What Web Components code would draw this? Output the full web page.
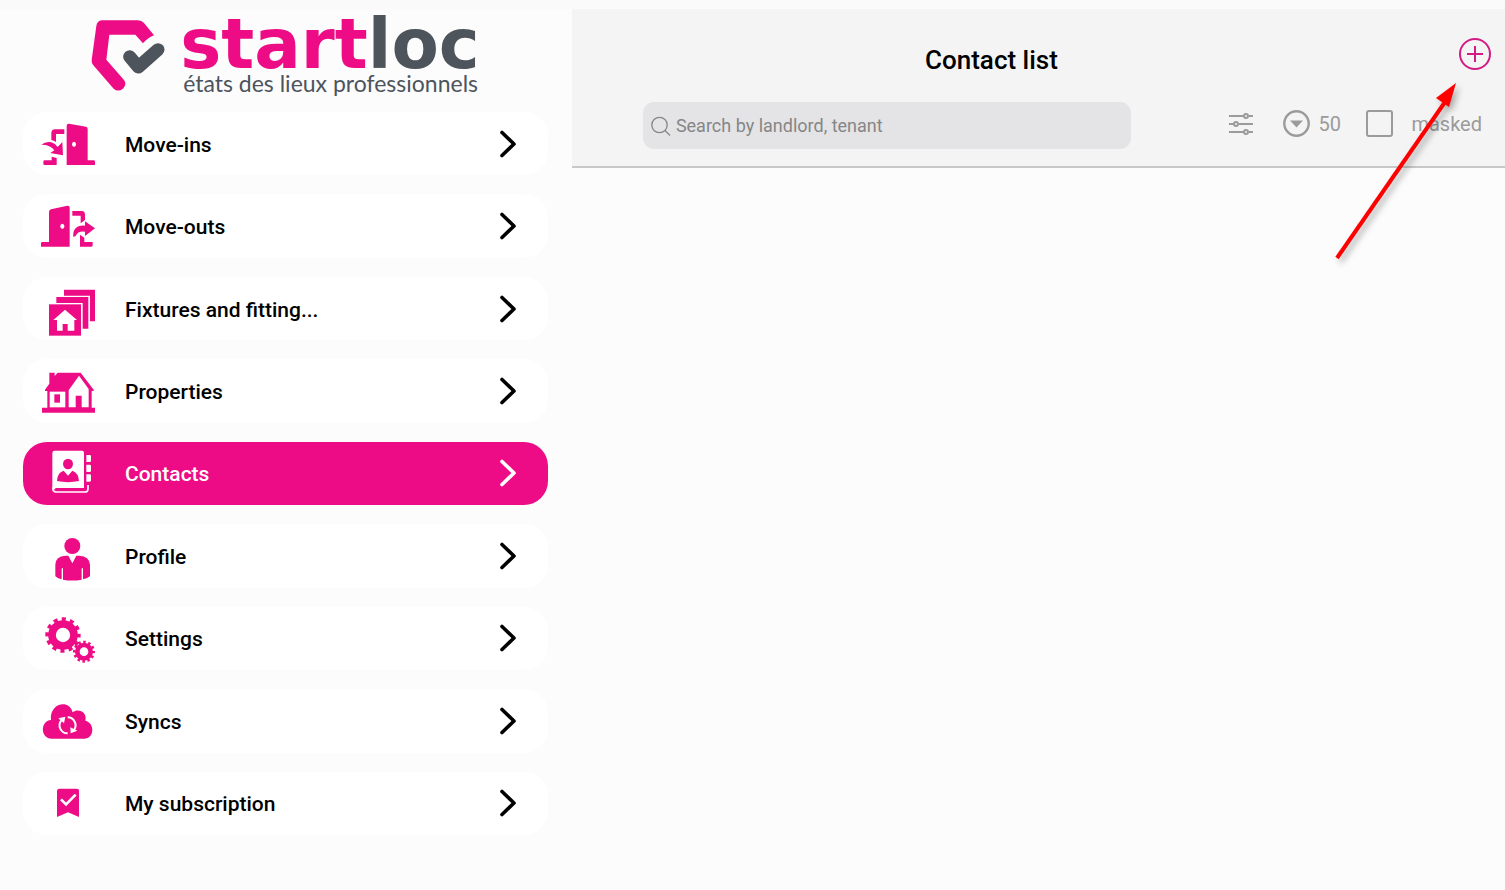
<!DOCTYPE html>
<html lang="en">
<head>
<meta charset="utf-8">
<meta name="viewport" content="width=device-width, initial-scale=1">
<title>Startloc - Contact list</title>
<style>
  :root {
    --brand: #ed0c86;
    --ink: #4d545c;
    --muted: #9b9b9b;
  }
  * { box-sizing: border-box; }
  body {
    margin: 0;
    background: #fcfcfc;
    color: #000;
    font-family: Roboto, "Liberation Sans", sans-serif;
  }
</style>
</head>
<body>
<startloc-app>
  <startloc-logo slot="side"></startloc-logo>
  <startloc-menu slot="side">
    <menu-entry icon="moveIn">Move-ins</menu-entry>
    <menu-entry icon="moveOut">Move-outs</menu-entry>
    <menu-entry icon="fixtures">Fixtures and fitting...</menu-entry>
    <menu-entry icon="house">Properties</menu-entry>
    <menu-entry icon="contacts" active>Contacts</menu-entry>
    <menu-entry icon="person">Profile</menu-entry>
    <menu-entry icon="gears">Settings</menu-entry>
    <menu-entry icon="cloud">Syncs</menu-entry>
    <menu-entry icon="bookmark">My subscription</menu-entry>
  </startloc-menu>
  <list-header>
    Contact list
    <search-field slot="tools" placeholder="Search by landlord, tenant"></search-field>
    <list-filters slot="tools"></list-filters>
  </list-header>
  <pointer-arrow></pointer-arrow>
</startloc-app>

<script>
const icons = {
  moveIn: {
    box: "96 50 162 162",
    body: `
      <path d="M170 76Q170 69 177 70L228 79Q233 80 233 86V180H251Q255 180 255 184V194H170Z"/>
      <ellipse class="hole" cx="192" cy="132" rx="6" ry="8"/>
      <path d="M163 87H135Q124 88 124 98V119Q131 120 138 125V101H163Z"/>
      <path d="M104 180H125V169L140 173V194H104Q100 194 100 190V184Q100 180 104 180Z"/>
      <path d="M94 133Q108 122 124 126Q136 130 143 140L157 125L159 165L121 158L133 150Q122 133 94 133Z"/>`
  },
  moveOut: {
    box: "96 297 162 162",
    body: `
      <path d="M93 430Q93 426 97 426H117V336Q117 330 123 328L172 317Q179 316 179 323V440H93Z"/>
      <ellipse class="hole" cx="157" cy="379" rx="6" ry="8"/>
      <path d="M187 333H216Q225 334 225 344V360L212 370V347H187Z"/>
      <path d="M210 404L223 413V426H248V436Q248 440 244 440H210Z"/>
      <path d="M190 411C188 387 200 375 225 377V364L255 385L225 408V395Q204 392 197 408Z"/>`
  },
  fixtures: {
    box: "96 35 162 162",
    body: `
      <path d="M162 58H255V153H240V76H162Z"/>
      <path d="M139 80H235V175H218V98H139Z"/>
      <path d="M117 102H213V196H117Z"/>
      <path class="hole" d="M165 118L201 149H193V181H173V161H158V181H141V149H130Z"/>`
  },
  house: {
    box: "96 282 162 162",
    body: `
      <path d="M118 308H134V318L143 308H212L251 359V363H245V413H255V428H96V413H112V363H105V359L118 341Z"/>
      <path class="hole" d="M119 365H166V412H119Z"/>
      <path d="M133 373H150V398H133Z"/>
      <path class="hole" d="M207 317L236 357V412H215V377H197V412H176V361Z"/>`
  },
  contacts: {
    box: "96 48 162 162",
    body: `
      <path d="M134 62H216Q222 62 222 68V174H136V178H127V69Q127 62 134 62Z"/>
      <path d="M129 172V177Q129 186 138 186H224Q234 186 234 176V165" fill="none" stroke="currentColor" stroke-width="5"/>
      <path d="M229 75H239Q243 75 243 79V92Q243 96 239 96H229ZM229 104H239Q243 104 243 108V122Q243 126 239 126H229ZM229 133H239Q243 133 243 137V151Q243 155 239 155H229Z"/>
      <ellipse class="hole" cx="174" cy="102" rx="15" ry="16"/>
      <path class="hole" d="M141 153Q141 128 161 122L174 137L187 122Q206 129 207 153Q174 160 141 153Z"/>`
  },
  person: {
    box: "96 297 162 162",
    body: `
      <circle cx="187" cy="348" r="24"/>
      <path d="M136 439V404Q137 378 166 377H175L187 400L199 377H208Q238 379 240 404V439Q230 446 219 448V415H215V449Q187 454 159 449V415H155V448Q144 446 136 439Z"/>`
  },
  gears: {
    box: "96 34 162 162",
    body: `
      <g fill="none" stroke="currentColor">
        <circle cx="159" cy="106" r="33" stroke-width="23"/>
        <circle cx="159" cy="106" r="47" stroke-width="12" pathLength="120" stroke-dasharray="5 5" stroke-dashoffset="2"/>
        <circle cx="222" cy="156" r="20" stroke-width="14"/>
        <circle cx="222" cy="156" r="29" stroke-width="8" pathLength="120" stroke-dasharray="5 5" stroke-dashoffset="2"/>
      </g>`
  },
  cloud: {
    box: "96 281 162 162",
    body: `
      <path d="M126 415C90 415 90 362 123 359C117 309 177 294 188 336C205 322 233 336 226 361C256 368 253 415 223 415Z"/>
      <g fill="none" stroke="#fff" stroke-width="6">
        <path d="M154 360A24 24 0 0 0 173 399"/>
        <path d="M173 351A24 24 0 0 1 192 389"/>
      </g>
      <path class="hole" d="M145 354L166 349L162 369ZM181 381L202 391L182 399Z"/>`
  },
  bookmark: {
    box: "96 49 162 162",
    body: `
      <path d="M148 87H201Q207 87 207 93V172L174 158L141 172V94Q141 87 148 87Z"/>
      <path d="M153 119L168 134L197 105" fill="none" stroke="#fff" stroke-width="8"/>`
  }
};

class StartlocApp extends HTMLElement {
  constructor() {
    super();
    this.attachShadow({ mode: "open" }).innerHTML = `
      <style>
        :host {
          position: relative;
          display: flex;
          min-height: 100vh;
          border-top: 9px solid #fafafa;
          box-sizing: border-box;
        }
        aside {
          flex: 0 0 38%;
          box-sizing: border-box;
          display: flex;
          flex-direction: column;
          padding: 8px 24px 55px 23px;
        }
        main { flex: 1; min-width: 0; }
      </style>
      <aside><slot name="side"></slot></aside>
      <main><slot></slot></main>
    `;
  }
}

class StartlocLogo extends HTMLElement {
  constructor() {
    super();
    this.attachShadow({ mode: "open" }).innerHTML = `
      <style>
        :host {
          display: flex;
          justify-content: center;
          gap: 14px;
          height: 95px;
          color: var(--ink);
          white-space: nowrap;
        }
        svg { flex: none; width: 75px; height: 74px; margin-top: 2px; }
        .name {
          font-family: "DejaVu Sans", sans-serif;
          font-size: 69px;
          font-weight: 700;
          line-height: 54px;
        }
        .name span { color: var(--brand); }
        .tagline {
          padding-left: 3px;
          font-family: Lato, "Open Sans", sans-serif;
          font-size: 23px;
          line-height: 24px;
        }
      </style>
      <svg viewBox="56 58 225 222" aria-hidden="true">
        <path fill="#ed0c86" d="M72 79Q74 62 91 62H197Q208 62 215 70L245 107Q228 113 212 131L189 105H111L102 180L155 241Q165 254 152 267Q137 278 124 267L63 197Q57 190 58 181Z"/>
        <path d="M172 171L198 202L257 150" fill="none" stroke="#4d545c" stroke-width="39" stroke-linecap="round" stroke-linejoin="round"/>
      </svg>
      <div>
        <div class="name"><span>start</span>loc</div>
        <div class="tagline">états des lieux professionnels</div>
      </div>
    `;
  }
}

class StartlocMenu extends HTMLElement {
  constructor() {
    super();
    this.attachShadow({ mode: "open" }).innerHTML = `
      <style>
        :host { flex: 1; display: grid; }
        nav {
          display: grid;
          grid-auto-rows: 1fr;
          gap: 19px;
        }
      </style>
      <nav><slot></slot></nav>
    `;
  }
}

class MenuEntry extends HTMLElement {
  connectedCallback() {
    const icon = icons[this.getAttribute("icon")];
    this.attachShadow({ mode: "open" }).innerHTML = `
      <style>
        :host {
          --card: #fff;
          display: grid;
          color: #000;
        }
        :host([active]) { --card: var(--brand); color: #fff; }
        a {
          display: flex;
          align-items: center;
          gap: 29px;
          padding: 0 32px 0 19px;
          border-radius: 24px;
          background: var(--card);
          color: inherit;
          font-size: 21px;
          font-weight: 500;
          line-height: 28px;
          text-decoration: none;
        }
        .icon {
          flex: none;
          width: 54px;
          height: 54px;
          overflow: visible;
          color: var(--brand);
          fill: currentColor;
        }
        :host([active]) .icon { color: #fff; }
        .icon .hole { fill: var(--card); }
        .icon[data-name="cloud"] .hole { fill: #fff; }
        span { flex: 1; padding-top: 2px; }
        .chevron { flex: none; width: 16px; height: 28px; }
      </style>
      <a href="#${this.getAttribute("icon")}">
        <svg class="icon" data-name="${this.getAttribute("icon")}" viewBox="${icon.box}" aria-hidden="true">${icon.body}</svg>
        <span><slot></slot></span>
        <svg class="chevron" viewBox="0 0 16 28" fill="none" stroke="currentColor" stroke-width="3.600" stroke-linecap="round" stroke-linejoin="round" aria-hidden="true">
          <path d="M2 2.500L14 14L2 25.500"/>
        </svg>
      </a>
    `;
  }
}

class ListHeader extends HTMLElement {
  constructor() {
    super();
    this.attachShadow({ mode: "open" }).innerHTML = `
      <style>
        :host {
          display: block;
          background: #f4f4f4;
          border-bottom: 2px solid #c8c8c8;
        }
        .bar { display: flex; padding-top: 28px; }
        h1 {
          flex: 1;
          margin: 0;
          padding-top: 7px;
          font-size: 26px;
          font-weight: 500;
          line-height: 32px;
          text-align: center;
        }
        button {
          width: 94px;
          height: 34px;
          padding: 0 13px 0 0;
          border: 0;
          background: none;
          color: #d31c83;
          text-align: right;
          cursor: pointer;
        }
        svg { display: block; margin-left: auto; }
        .tools {
          display: flex;
          align-items: center;
          gap: 97px;
          padding: 26px 23px 17px 71px;
        }
      </style>
      <div class="bar">
        <h1><slot></slot></h1>
        <button type="button" aria-label="Add contact">
          <svg width="34" height="34" viewBox="0 0 34 34" fill="none" stroke="currentColor" stroke-width="2" aria-hidden="true">
            <circle cx="17" cy="17" r="15"/>
            <path d="M17 9V25M9 17H25"/>
          </svg>
        </button>
      </div>
      <div class="tools"><slot name="tools"></slot></div>
    `;
  }
}

class SearchField extends HTMLElement {
  connectedCallback() {
    const placeholder = this.getAttribute("placeholder");
    this.attachShadow({ mode: "open" }).innerHTML = `
      <style>
        :host { flex: 1; min-width: 0; }
        label {
          display: flex;
          align-items: center;
          gap: 5px;
          height: 47px;
          padding: 0 8px;
          border-radius: 11px;
          background: #e4e4e6;
        }
        svg { flex: none; }
        input {
          flex: 1;
          min-width: 0;
          padding: 0;
          border: 0;
          outline: 0;
          background: none;
          color: #333;
          font: 400 18px/24px Roboto, sans-serif;
        }
        input::placeholder { color: #868686; opacity: 1; }
      </style>
      <label>
        <svg width="20" height="20" viewBox="0 0 20 20" fill="none" stroke="#868686" stroke-width="1.300" aria-hidden="true">
          <circle cx="8.500" cy="9" r="7.700"/>
          <path d="M14 14.500L19 19.500"/>
        </svg>
        <input type="text" placeholder="${placeholder}" aria-label="${placeholder}">
      </label>
    `;
  }
}

class ListFilters extends HTMLElement {
  constructor() {
    super();
    this.attachShadow({ mode: "open" }).innerHTML = `
      <style>
        :host {
          display: flex;
          align-items: center;
          gap: 25px;
          padding-bottom: 4px;
          color: var(--muted);
          font-size: 20px;
          line-height: 24px;
        }
        svg { display: block; flex: none; }
        button {
          padding: 0;
          margin-right: 4px;
          border: 0;
          background: none;
          color: inherit;
        }
        label { display: flex; align-items: center; }
        .count { gap: 8px; }
        .masked { gap: 18px; }
        select {
          appearance: none;
          width: 23px;
          padding: 0;
          border: 0;
          background: none;
          color: inherit;
          font: inherit;
        }
        input {
          appearance: none;
          width: 27px;
          height: 27px;
          margin: 0;
          border: 2px solid var(--muted);
          border-radius: 3px;
        }
        input:checked { background: var(--brand); }
      </style>
      <button type="button" aria-label="Filters">
        <svg width="26" height="26" viewBox="0 0 26 26" fill="none" stroke="currentColor" stroke-width="2" aria-hidden="true">
          <path d="M1 5H16M21 5H25M1 13H6M11 13H25M1 21H16M21 21H25"/>
          <circle cx="18" cy="5" r="2"/>
          <circle cx="8" cy="13" r="2"/>
          <circle cx="18" cy="21" r="2"/>
        </svg>
      </button>
      <label class="count">
        <svg width="27" height="27" viewBox="0 0 27 27" aria-hidden="true">
          <circle cx="13.500" cy="13.500" r="12.200" fill="none" stroke="currentColor" stroke-width="2.400"/>
          <path d="M7 10.500H20L13.500 17.500Z" fill="currentColor"/>
        </svg>
        <select aria-label="Contacts shown">
          <option>20</option>
          <option selected>50</option>
        </select>
      </label>
      <label class="masked"><input type="checkbox"> masked</label>
    `;
  }
}

// lies over the header and points at the add button
class PointerArrow extends HTMLElement {
  constructor() {
    super();
    this.attachShadow({ mode: "open" }).innerHTML = `
      <style>
        :host {
          position: absolute;
          top: 71px;
          right: 45px;
          pointer-events: none;
        }
        svg {
          display: block;
          overflow: visible;
          filter: drop-shadow(3px 4px 3px rgba(0, 0, 0, .3));
        }
      </style>
      <svg width="130" height="180" viewBox="0 0 130 180" aria-hidden="true">
        <path d="M7 178L115 22" stroke="#f00" stroke-width="4"/>
        <path d="M126 3L106 18L119 27Z" fill="#f00"/>
      </svg>
    `;
  }
}

customElements.define("startloc-app", StartlocApp);
customElements.define("startloc-logo", StartlocLogo);
customElements.define("startloc-menu", StartlocMenu);
customElements.define("menu-entry", MenuEntry);
customElements.define("list-header", ListHeader);
customElements.define("search-field", SearchField);
customElements.define("list-filters", ListFilters);
customElements.define("pointer-arrow", PointerArrow);
</script>
</body>
</html>
